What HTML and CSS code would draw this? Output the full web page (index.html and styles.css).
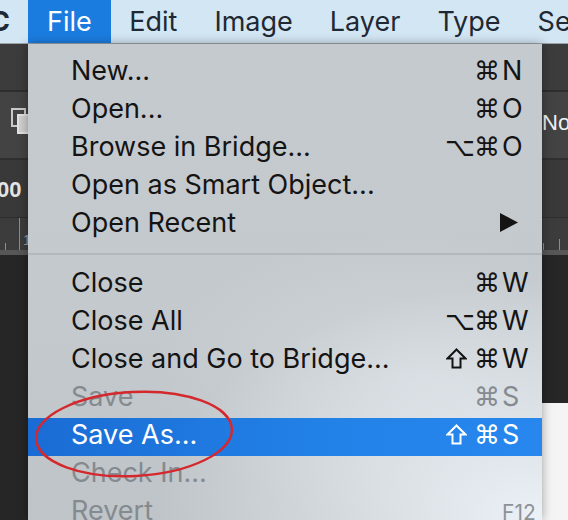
FILE: index.html
```html
<!DOCTYPE html>
<html>
<head>
<meta charset="utf-8">
<link rel="stylesheet" href="styles.css">
</head>
<body>
<div class="screen">
  <header class="menubar">
    <div class="mb-app"><span>CC</span></div>
    <span class="mb-item active">File</span>
    <span class="mb-item">Edit</span>
    <span class="mb-item">Image</span>
    <span class="mb-item">Layer</span>
    <span class="mb-item">Type</span>
    <span class="mb-item">Select</span>
  </header>

  <div class="workspace">
    <div class="bar1"></div>
    <div class="bar2">
      <svg class="arrange-icon" width="17" height="26" viewBox="0 0 17 26">
        <rect x="1" y="1" width="13" height="17" fill="none" stroke="#c9c9c9" stroke-width="2"/>
        <rect x="7" y="7" width="12" height="18" fill="#cfcfcf" stroke="#e2e2e2" stroke-width="2"/>
      </svg>
      <div class="blend"><span>Normal</span></div>
    </div>
    <div class="bar3"><span class="zoom">00</span></div>
    <div class="ruler">
      <span class="tick t1"></span>
      <span class="tick t2"></span>
      <span class="tick-label">1</span>
      <div class="ruler-right">
        <span class="tick t3"></span>
        <span class="tick t4"></span>
      </div>
    </div>
    <div class="lower">
      <div class="lower-left"></div>
      <div class="lower-right">
        <div class="pasteboard"></div>
        <div class="doc"></div>
      </div>
    </div>
  </div>

  <nav class="menu">
    <div class="row"><span class="label">New...</span><span class="mods"><span class="g">⌘</span></span><span class="key">N</span></div>
    <div class="row"><span class="label">Open...</span><span class="mods"><span class="g">⌘</span></span><span class="key">O</span></div>
    <div class="row"><span class="label">Browse in Bridge...</span><span class="mods"><span class="g">⌥</span><span class="g">⌘</span></span><span class="key">O</span></div>
    <div class="row"><span class="label">Open as Smart Object...</span></div>
    <div class="row"><span class="label">Open Recent</span><span class="key arrow"><svg width="18" height="19" viewBox="0 0 18 19"><polygon points="0,0 18,9.5 0,19" fill="#141414"/></svg></span></div>
    <div class="sep"></div>
    <div class="row"><span class="label">Close</span><span class="mods"><span class="g">⌘</span></span><span class="key">W</span></div>
    <div class="row"><span class="label">Close All</span><span class="mods"><span class="g">⌥</span><span class="g">⌘</span></span><span class="key">W</span></div>
    <div class="row"><span class="label">Close and Go to Bridge...</span><span class="mods"><span class="g shift"><svg width="21" height="21" viewBox="0 0 21 21"><path d="M10.5 1.5 L19.5 10.5 L14.5 10.5 L14.5 19.5 L6.5 19.5 L6.5 10.5 L1.5 10.5 Z" fill="none" stroke="currentColor" stroke-width="2" stroke-linejoin="miter"/></svg></span><span class="g">⌘</span></span><span class="key">W</span></div>
    <div class="row disabled"><span class="label">Save</span><span class="mods"><span class="g">⌘</span></span><span class="key">S</span></div>
    <div class="row selected"><span class="label">Save As...</span><span class="mods"><span class="g shift"><svg width="21" height="21" viewBox="0 0 21 21"><path d="M10.5 1.5 L19.5 10.5 L14.5 10.5 L14.5 19.5 L6.5 19.5 L6.5 10.5 L1.5 10.5 Z" fill="none" stroke="currentColor" stroke-width="2" stroke-linejoin="miter"/></svg></span><span class="g">⌘</span></span><span class="key">S</span></div>
    <div class="row disabled"><span class="label">Check In...</span></div>
    <div class="row disabled"><span class="label">Revert</span><span class="key fkey">F12</span></div>
  </nav>

  <svg class="annotation" width="568" height="520" viewBox="0 0 568 520">
    <ellipse cx="134" cy="434" rx="98" ry="42" fill="none" stroke="#d4282d" stroke-width="2.4" transform="rotate(-3 134 434)"/>
  </svg>
</div>
</body>
</html>
```
FILE: styles.css
```css
html, body {
  margin: 0;
  padding: 0;
}

body {
  width: 568px;
  height: 520px;
  overflow: hidden;
  background: #262626;
  font-family: Inter, "Noto Sans", sans-serif;
}

.screen {
  position: relative;
  width: 568px;
  height: 520px;
  overflow: hidden;
}

/* ---------- macOS menu bar ---------- */
.menubar {
  display: flex;
  height: 43px;
  border-bottom: 1px solid #9ca4aa;
  background: #d3e6f3;
  font-size: 27px;
  line-height: 43px;
  color: #1e2934;
  white-space: nowrap;
}

.mb-app {
  display: flex;
  justify-content: flex-end;
  width: 10px;
  margin-right: 18px;
  font-weight: 700;
  flex-shrink: 0;
}

.mb-item {
  padding: 0 18.5px;
  flex-shrink: 0;
}

.mb-item.active {
  padding: 0 19px;
  background: #1b7ce0;
  color: #ffffff;
}

/* ---------- Photoshop workspace behind ---------- */
.workspace {
  display: flex;
  flex-direction: column;
  height: 476px;
}

.bar1 {
  height: 46px;
  background: #3c3c3c;
  border-bottom: 2px solid #2e2e2e;
}

.bar2 {
  height: 66px;
  background: #434343;
  border-bottom: 2px solid #2f2f2f;
  display: flex;
  align-items: center;
}

.arrange-icon {
  display: block;
  margin-left: 11px;
  margin-top: -8px;
}

.blend {
  margin-left: auto;
  width: 26px;
  white-space: nowrap;
  color: #f0f0f0;
  font-size: 22px;
  font-family: "Liberation Sans", Arial, sans-serif;
  margin-top: -4px;
}

.bar3 {
  height: 57px;
  background: #393939;
  border-bottom: 1px solid #2d2d2d;
  display: flex;
  align-items: center;
}

.zoom {
  margin-left: -3px;
  font-family: "Liberation Sans", Arial, sans-serif;
  font-weight: 700;
  font-size: 22px;
  color: #e4e4e4;
  margin-top: 2px;
}

.ruler {
  height: 32px;
  background: #3c3c3c;
  border-bottom: 5px solid #575757;
  display: flex;
  align-items: flex-end;
}

.tick {
  display: block;
  width: 1px;
  background: #8c8c8c;
}

.t1 { margin-left: 5px; height: 7px; }
.t2 { margin-left: 13px; height: 32px; }
.t3 { height: 7px; }
.t4 { margin-left: 15px; height: 11px; }

.tick-label {
  margin-left: 3px;
  margin-bottom: 2px;
  font-family: "Liberation Sans", Arial, sans-serif;
  font-size: 14px;
  line-height: 16px;
  color: #9a9a9a;
}

.ruler-right {
  margin-left: auto;
  width: 25px;
  display: flex;
  align-items: flex-end;
}

.lower {
  flex: 1;
  display: flex;
}

.lower-left {
  width: 542px;
  background: #262626;
}

.lower-right {
  flex: 1;
  display: flex;
  flex-direction: column;
}

.pasteboard {
  height: 148px;
  background: #262626;
}

.doc {
  flex: 1;
  background: #f4f4f4;
}

/* ---------- File menu ---------- */
.menu {
  position: absolute;
  left: 28px;
  top: 44px;
  width: 514px;
  bottom: 0;
  padding-top: 10px;
  box-sizing: border-box;
  background:
    radial-gradient(ellipse 75% 50% at 100% 100%, rgba(238, 244, 249, 0.95), rgba(238, 244, 249, 0) 100%),
    radial-gradient(ellipse 50% 30% at 75% 70%, rgba(216, 222, 227, 0.6), rgba(216, 222, 227, 0) 100%),
    linear-gradient(180deg, #c5cacf 0%, #c4c9cd 60%, #bfc4c8 100%);
  box-shadow: 0 0 10px rgba(0, 0, 0, 0.35);
  font-size: 27px;
  color: #141414;
}

.row {
  display: flex;
  align-items: baseline;
  height: 38px;
  line-height: 30px;
  padding: 2px 2px 6px 43px;
  box-sizing: border-box;
  white-space: nowrap;
}

.label {
  flex: 1;
}

.mods {
  display: flex;
  align-items: baseline;
  padding-right: 5px;
}

.g {
  display: inline-block;
  width: 23px;
  text-align: center;
  margin-left: 6px;
  font-family: "DejaVu Sans", sans-serif;
  font-size: 26px;
  line-height: 30px;
}

.g.shift {
  align-self: flex-start;
}

.g.shift svg {
  display: block;
  margin: 4px 0 0 1px;
}

.key {
  width: 38px;
}

.key.arrow {
  align-self: flex-start;
  margin-left: -2px;
  width: 40px;
}

.key.arrow svg {
  display: block;
  margin-top: 5px;
}

.fkey {
  font-size: 21px;
  color: #8d9297;
}

.row.disabled {
  color: #858a8f;
}

.row.selected {
  background: linear-gradient(90deg, #1a6cd4 0%, #2282e8 60%, #2787ee 100%);
  color: #ffffff;
}

.sep {
  height: 2px;
  margin: 9px 0 11px;
  background: #b3b8bc;
}

.annotation {
  position: absolute;
  left: 0;
  top: 0;
  pointer-events: none;
}
```
